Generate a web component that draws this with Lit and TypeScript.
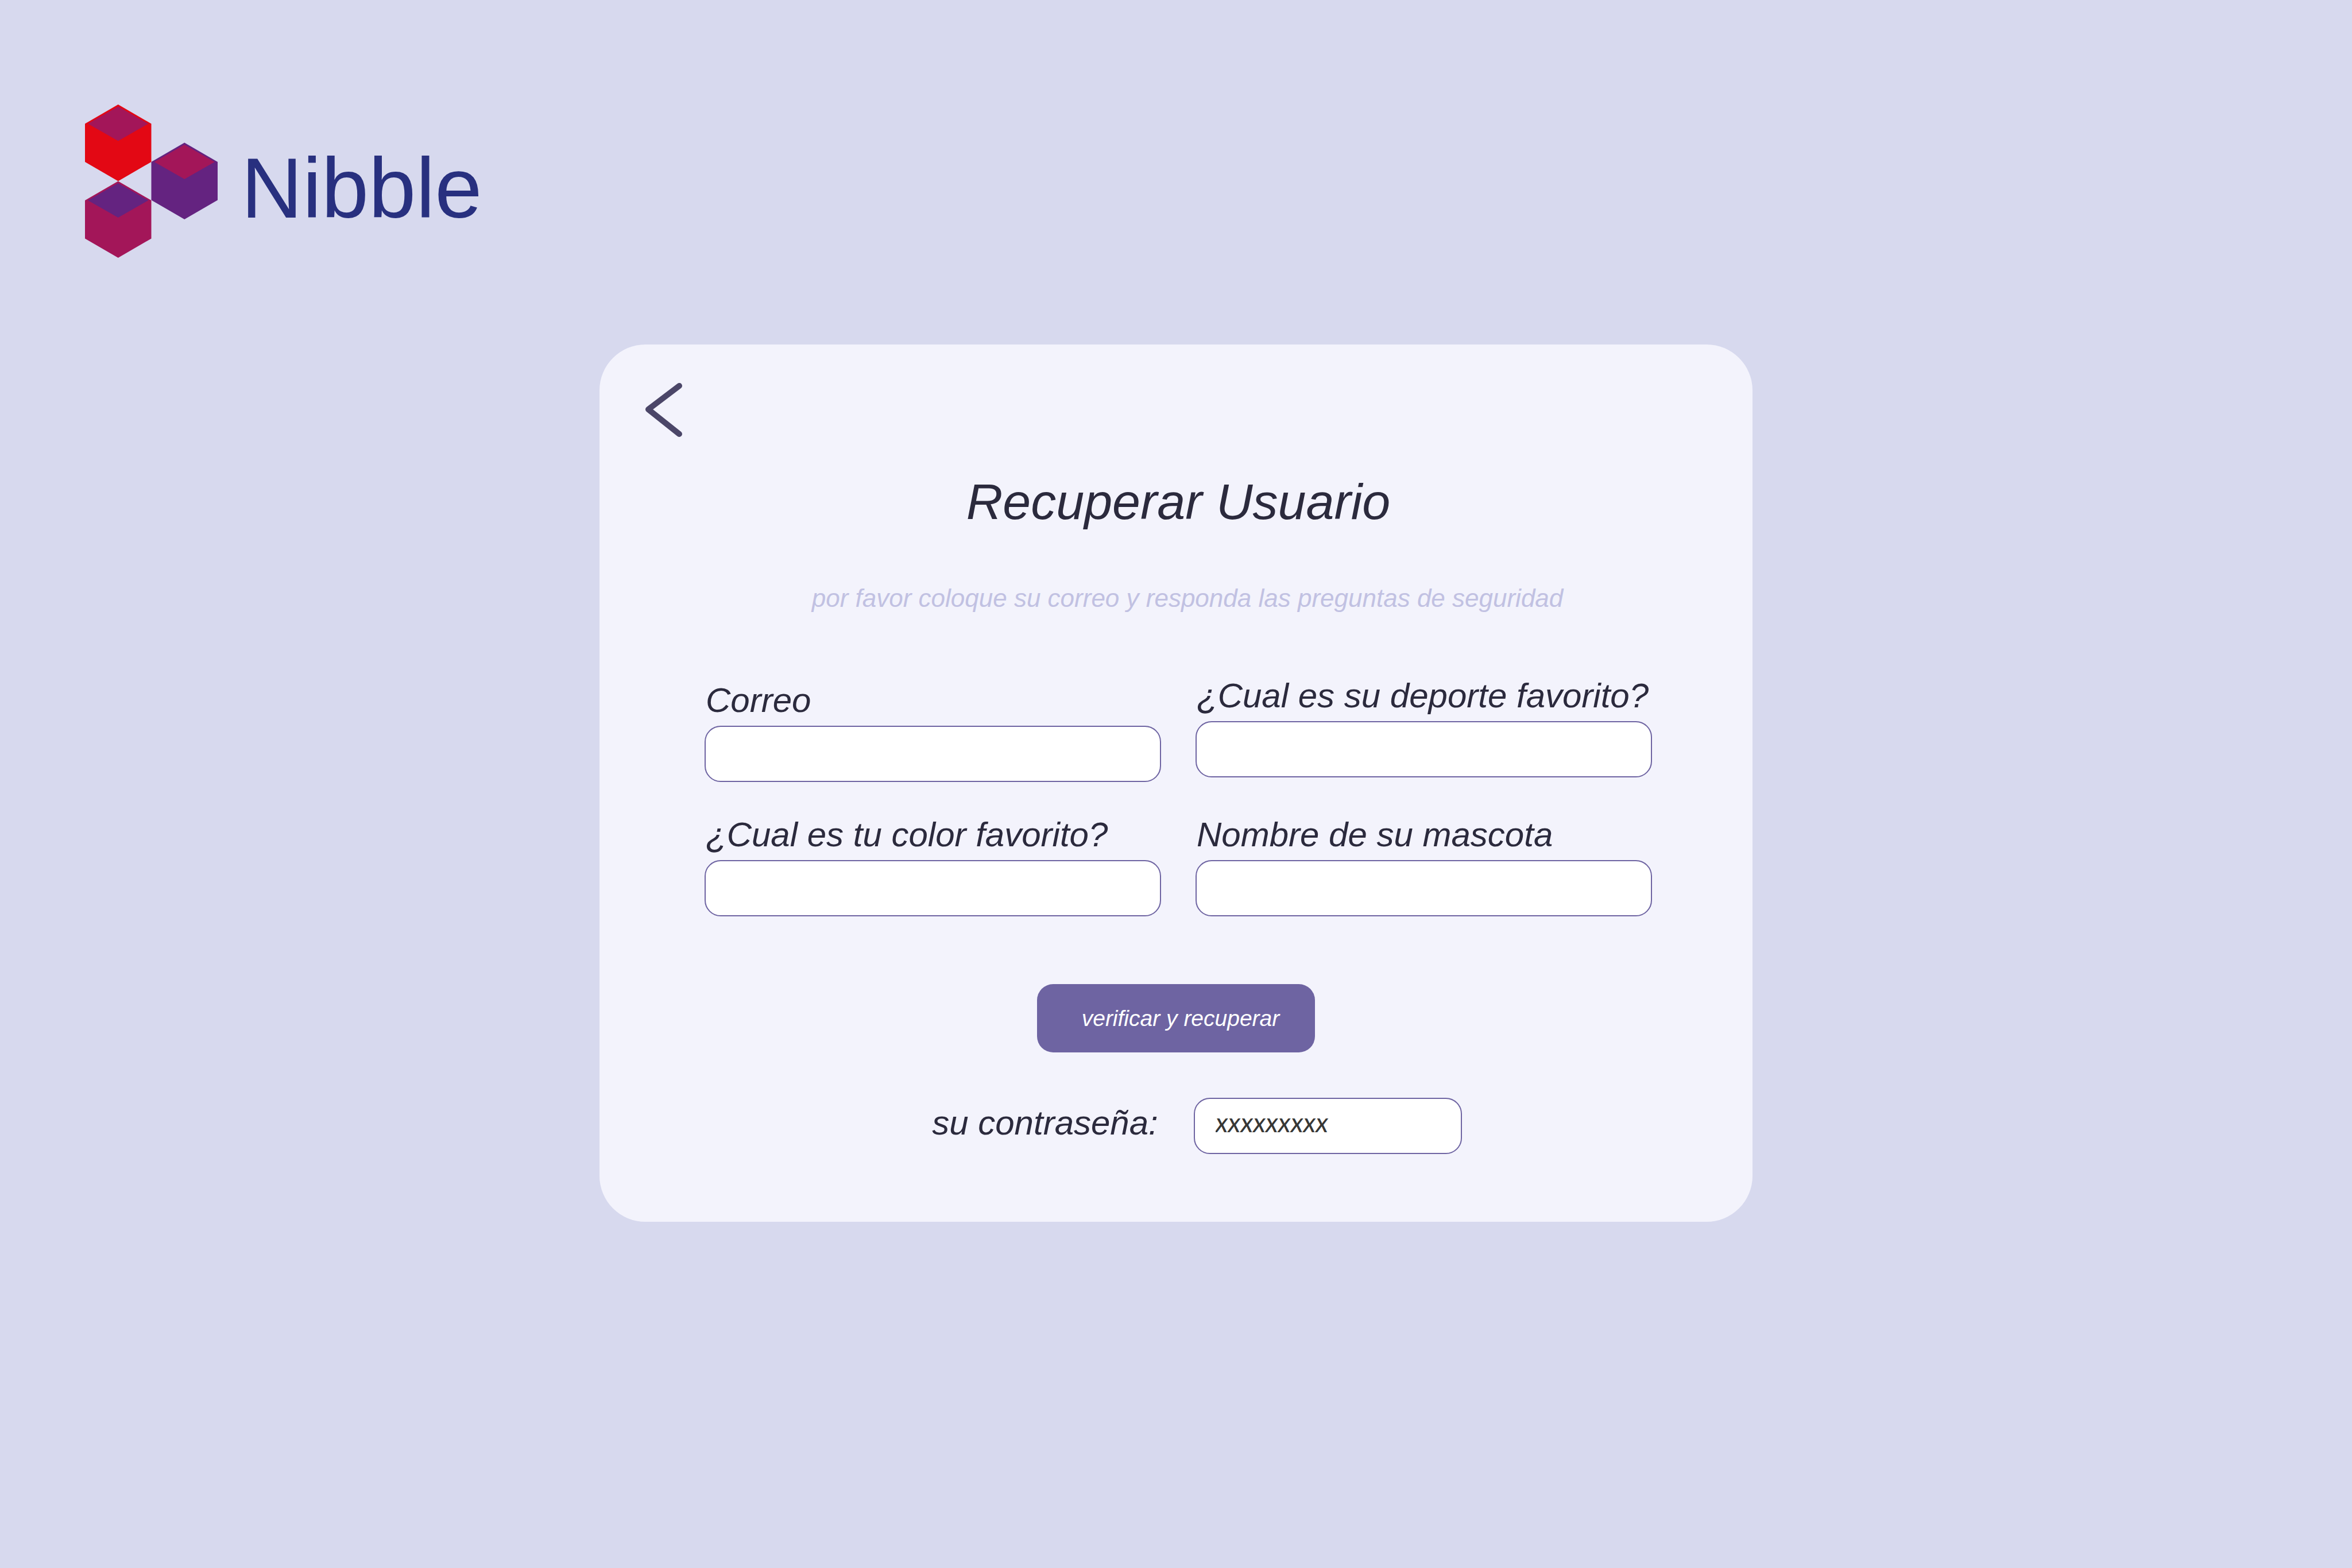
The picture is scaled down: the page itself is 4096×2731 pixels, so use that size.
import { LitElement, html, css, svg } from "lit";
import { customElement } from "lit/decorators.js";

const hexagon = (x: number, y: number, fill: string) =>
  svg`<polygon fill=${fill} points="${x + 100},${y} ${x + 200},${y + 58} ${x + 200},${y + 173} ${x + 100},${y + 231} ${x},${y + 173} ${x},${y + 58}" />`;

const lid = (x: number, y: number, fill: string) =>
  svg`<polygon fill=${fill} points="${x + 100},${y + 6} ${x + 191},${y + 58} ${x + 100},${y + 110} ${x + 9},${y + 58}" />`;

const cube = (x: number, y: number, side: string, top: string) =>
  svg`${hexagon(x, y, side)}${lid(x, y, top)}`;

@customElement("nibble-logo")
export class NibbleLogo extends LitElement {
  static styles = css`
    :host {
      display: flex;
      align-items: center;
      gap: 41px;
      color: #28307f;
      font-size: 148px;
      line-height: 172px;
    }
    .mark {
      display: block;
      width: 231px;
      height: 267px;
    }
    .name {
      padding-top: 24px;
    }
  `;

  render() {
    return html`
      <svg class="mark" viewBox="0 0 400 462" preserveAspectRatio="none" aria-hidden="true">
        ${cube(0, 0, "#e30814", "#a31659")}
        ${cube(200, 115, "#642380", "#a31659")}
        ${cube(0, 231, "#a31659", "#642380")}
      </svg>
      <span class="name">Nibble</span>
    `;
  }
}

@customElement("app-root")
export class AppRoot extends LitElement {
  static styles = css`
    :host {
      display: block;
      box-sizing: border-box;
      min-height: 100vh;
      padding: 182px 148px 0;
      background: #d7d9ee;
      color: #2b2a3d;
      font-family: "Liberation Sans", Arial, sans-serif;
    }
    * {
      box-sizing: border-box;
    }
    .card {
      display: flex;
      flex-direction: column;
      align-items: center;
      width: 100%;
      max-width: 2008px;
      margin: 151px auto 0;
      padding: 60px 80px 118px;
      border-radius: 80px;
      background: #f3f3fc;
      font-style: italic;
    }
    .back {
      display: block;
      align-self: flex-start;
      padding: 0;
      border: 0;
      background: none;
      color: #4b4668;
      cursor: pointer;
    }
    .chevron {
      display: block;
      width: 66px;
      height: 108px;
      fill: none;
      stroke: currentColor;
      stroke-width: 10;
      stroke-linecap: round;
      stroke-linejoin: round;
    }
    .title {
      margin: 56px 0 0;
      padding-left: 8px;
      font-size: 88px;
      font-weight: 400;
      line-height: 100px;
    }
    .hint {
      margin: 93px 0 0;
      padding-left: 40px;
      color: #c1c1e2;
      font-size: 44px;
      line-height: 50px;
    }
    .form {
      display: flex;
      flex-direction: column;
      align-items: center;
      width: 100%;
      margin-top: 111px;
    }
    .fields {
      display: grid;
      grid-template-columns: repeat(2, minmax(0, 795px));
      justify-content: center;
      align-items: end;
      gap: 60px;
      width: 100%;
      padding-left: 8px;
    }
    .column {
      display: flex;
      flex-direction: column;
      gap: 58px;
    }
    .column.questions {
      gap: 66px;
    }
    .field {
      display: flex;
      flex-direction: column;
      gap: 10px;
    }
    label {
      padding-left: 2px;
      font-size: 60px;
      line-height: 68px;
    }
    input {
      width: 100%;
      height: 98px;
      padding: 0 36px;
      border: 2px solid #6e64a2;
      border-radius: 28px;
      background: #fff;
      color: #373736;
      font: italic 44px "Liberation Sans", Arial, sans-serif;
    }
    .submit {
      margin-top: 118px;
      padding: 37px 62px 37px 78px;
      border: 0;
      border-radius: 28px;
      background: #6e64a2;
      color: #fff;
      font: italic 39px/45px "Liberation Sans", Arial, sans-serif;
      cursor: pointer;
    }
    .result {
      display: flex;
      align-items: center;
      gap: 62px;
      margin-top: 79px;
      padding-left: 71px;
    }
    .result label {
      padding-bottom: 10px;
    }
    .result input {
      width: 467px;
      padding-bottom: 14px;
      font: italic 47px Lato, "Open Sans", sans-serif;
    }
  `;

  private field(id: string, text: string, type = "text") {
    return html`
      <div class="field">
        <label for=${id}>${text}</label>
        <input id=${id} type=${type} />
      </div>
    `;
  }

  render() {
    return html`
      <header><nibble-logo></nibble-logo></header>
      <main class="card">
        <button class="back" type="button" aria-label="Volver">
          <svg class="chevron" viewBox="0 0 66 108" aria-hidden="true">
            <path d="M59 12 L5 53 L59 96" />
          </svg>
        </button>
        <h1 class="title">Recuperar Usuario</h1>
        <p class="hint">por favor coloque su correo y responda las preguntas de seguridad</p>
        <form class="form">
          <div class="fields">
            <div class="column">
              ${this.field("correo", "Correo", "email")}
              ${this.field("color", "¿Cual es tu color favorito?")}
            </div>
            <div class="column questions">
              ${this.field("deporte", "¿Cual es su deporte favorito?")}
              ${this.field("mascota", "Nombre de su mascota")}
            </div>
          </div>
          <button class="submit" type="button">verificar y recuperar</button>
          <div class="result">
            <label for="clave">su contraseña:</label>
            <input id="clave" type="text" value="xxxxxxxxx" readonly />
          </div>
        </form>
      </main>
    `;
  }
}
